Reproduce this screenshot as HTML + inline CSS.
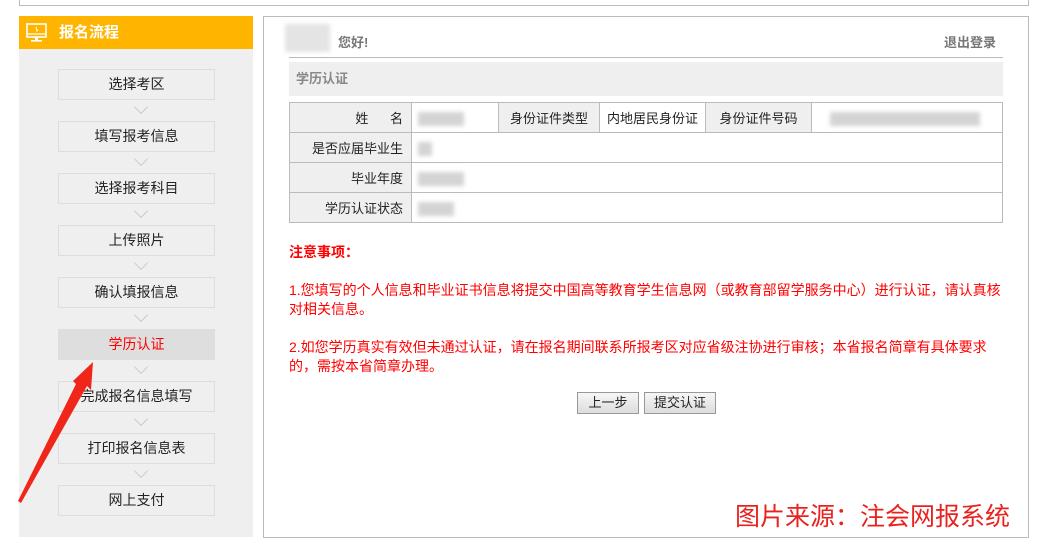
<!DOCTYPE html>
<html><head><meta charset="utf-8"><style>
*{margin:0;padding:0;box-sizing:border-box}
body{width:1040px;height:547px;background:#fff;position:relative;overflow:hidden;font-family:"Liberation Sans","Noto Sans CJK SC",sans-serif;font-size:13px;color:#222}
.a{position:absolute}
.topbox{left:19px;top:-10px;width:1010px;height:16px;border:1px solid #bbb}
.side{left:19px;top:16px;width:234px;height:521px;background:#efefef}
.sh{left:19px;top:16px;width:234px;height:33px;background:#ffb400;color:#fff;font-weight:bold;font-size:15px;line-height:33px;padding-left:40px}
.it{left:58px;width:157px;height:31px;border:1px solid #ddd;text-align:center;line-height:29px;font-size:14px;color:#222}
.it.on{background:#dedede;border-color:#dedede;color:#f00}
.chev{left:136px;width:10px;height:10px;border-right:1.5px solid #c8ccd4;border-bottom:1.5px solid #c8ccd4;transform:rotate(45deg)}
.main{left:263px;top:16px;width:766px;height:522px;border:1px solid #bbb}
table{border-collapse:collapse;position:absolute;left:289px;top:102px;width:714px}
td{border:1px solid #bbb;height:30px;font-size:13px;padding:0 8px}
td.l{background:#efefef;text-align:right;width:122px}
td.g{background:#efefef;text-align:center}
.blur{background:#d4d4d4;filter:blur(2px)}
.red{color:#f00;font-size:14px;line-height:19px}
.btn{top:392px;height:22px;border:1px solid #999;background:linear-gradient(#f6f6f6,#ddd);font-size:13px;line-height:20px;text-align:center}
</style></head><body>
<div class="a topbox"></div>
<div class="a side"></div>
<div class="a sh">报名流程</div>
<svg class="a" style="left:26px;top:23px" width="22" height="20" viewBox="0 0 22 20"><rect x="1" y="1" width="19" height="13" fill="none" stroke="#fff" stroke-width="1.6"/><line x1="1" y1="11" x2="20" y2="11" stroke="#fff" stroke-width="1.2"/><path d="M10 4l1 4 1-1" stroke="#fff" fill="none" stroke-width="1"/><rect x="9" y="14" width="3" height="3" fill="#fff"/><rect x="5" y="17" width="11" height="1.6" fill="#fff"/></svg>
<div class="a it" style="top:69px">选择考区</div>
<div class="a chev" style="top:102px"></div>
<div class="a it" style="top:121px">填写报考信息</div>
<div class="a chev" style="top:154px"></div>
<div class="a it" style="top:173px">选择报考科目</div>
<div class="a chev" style="top:206px"></div>
<div class="a it" style="top:225px">上传照片</div>
<div class="a chev" style="top:258px"></div>
<div class="a it" style="top:277px">确认填报信息</div>
<div class="a chev" style="top:310px"></div>
<div class="a it on" style="top:329px">学历认证</div>
<div class="a chev" style="top:362px"></div>
<div class="a it" style="top:381px">完成报名信息填写</div>
<div class="a chev" style="top:414px"></div>
<div class="a it" style="top:433px">打印报名信息表</div>
<div class="a chev" style="top:466px"></div>
<div class="a it" style="top:485px">网上支付</div>
<svg class="a" style="left:0;top:0" width="120" height="547"><polygon points="18,501 76,384 73,381 93,362 91,390 87,386 21,503" fill="#f0261b"/></svg>
<div class="a main"></div>
<div class="a blur" style="left:285px;top:24px;width:45px;height:28px;background:#e4e4e4"></div>
<div class="a" style="left:338px;top:32px;font-weight:bold;color:#777">您好!</div>
<div class="a" style="left:944px;top:32px;font-weight:bold;color:#777">退出登录</div>
<div class="a" style="left:289px;top:57px;width:714px;height:1px;background:#bbb"></div>
<div class="a" style="left:289px;top:62px;width:714px;height:34px;background:#efefef;color:#888;font-weight:bold;line-height:34px;padding-left:7px">学历认证</div>
<table>
<tr><td class="l">姓&nbsp;&nbsp;&nbsp;&nbsp;&nbsp;&nbsp;名</td><td style="width:87px"></td><td class="g" style="width:101px">身份证件类型</td><td style="width:106px;text-align:center;padding:0">内地居民身份证</td><td class="g" style="width:106px">身份证件号码</td><td></td></tr>
<tr><td class="l">是否应届毕业生</td><td colspan="5"></td></tr>
<tr><td class="l">毕业年度</td><td colspan="5"></td></tr>
<tr><td class="l">学历认证状态</td><td colspan="5"></td></tr>
</table>
<div class="a blur" style="left:418px;top:112px;width:46px;height:14px"></div>
<div class="a blur" style="left:418px;top:142px;width:14px;height:14px"></div>
<div class="a blur" style="left:418px;top:172px;width:46px;height:14px"></div>
<div class="a blur" style="left:418px;top:202px;width:36px;height:14px"></div>
<div class="a blur" style="left:830px;top:112px;width:150px;height:14px"></div>
<div class="a red" style="left:289px;top:243px;font-weight:bold">注意事项：</div>
<div class="a red" style="left:289px;top:281px;width:716px">1.您填写的个人信息和毕业证书信息将提交中国高等教育学生信息网（或教育部留学服务中心）进行认证，请认真核对相关信息。</div>
<div class="a red" style="left:289px;top:338px;width:716px">2.如您学历真实有效但未通过认证，请在报名期间联系所报考区对应省级注协进行审核；本省报名简章有具体要求的，需按本省简章办理。</div>
<div class="a btn" style="left:577px;width:62px">上一步</div>
<div class="a btn" style="left:644px;width:72px">提交认证</div>
<div class="a" style="left:735px;top:497px;color:#e8231f;font-size:25px">图片来源：注会网报系统</div>
</body></html>
